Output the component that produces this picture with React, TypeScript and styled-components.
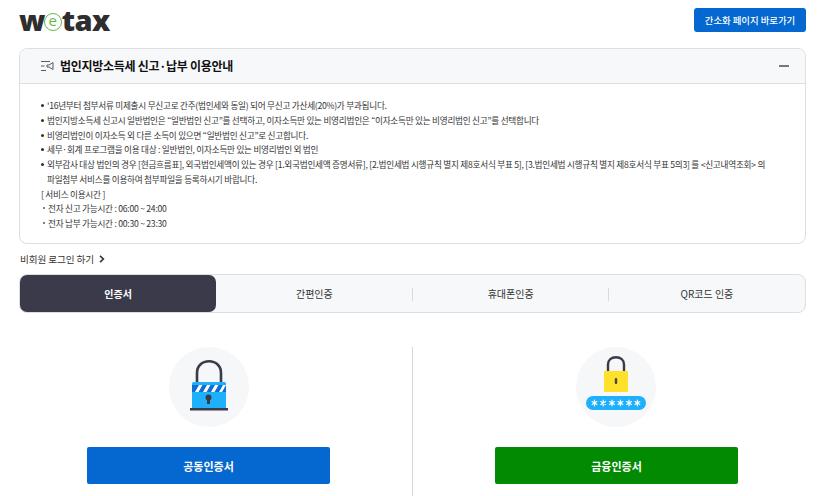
import React from "react";
import styled, { createGlobalStyle } from "styled-components";

const Global = createGlobalStyle`
  html, body { margin: 0; padding: 0; background: #fff; overflow: hidden; }
  body { font-family: "Noto Sans CJK KR", "Noto Sans", sans-serif; color: #222; }
  * { box-sizing: border-box; }
`;

const Page = styled.div`
  width: 829px;
  height: 496px;
  padding: 8px 23px 0 19px;
  overflow: hidden;
`;
const TopBar = styled.header`
  display: flex;
  justify-content: space-between;
  align-items: flex-start;
  height: 40px;
`;
const Logo = styled.div`
  display: flex;
  align-items: center;
  height: 24px;
  font-family: "Open Sans", "Liberation Sans", sans-serif;
  font-weight: 800;
  font-size: 29px;
  letter-spacing: -0.6px;
  color: #2e2e2e;
  line-height: 24px;
`;
const LogoE = styled.span`
  width: 18px;
  height: 18px;
  margin: 3px 0 0 -1px;
  border: 1.5px solid #62bb46;
  border-radius: 50%;
  color: #62bb46;
  font-size: 15px;
  font-weight: 500;
  line-height: 13px;
  text-align: center;
  letter-spacing: 0;
`;
const SimpleButton = styled.button`
  width: 112px;
  height: 24px;
  border: 0;
  border-radius: 3px;
  background: #0468d0;
  color: #fff;
  font: 500 9.4px "Noto Sans CJK KR", sans-serif;
  padding: 0;
`;
const Card = styled.section`
  height: 196px;
  border: 1px solid #dcdee2;
  border-radius: 8px;
  overflow: hidden;
`;
const CardHeader = styled.div`
  display: flex;
  align-items: center;
  height: 35px;
  padding: 0 16px 0 21px;
  background: #f7f8fa;
  border-bottom: 1px solid #dcdee2;
`;
const CardTitle = styled.h2`
  flex: 1;
  margin: -2px 0 0 5px;
  font-size: 12px;
  font-weight: 700;
  letter-spacing: -0.28px;
  color: #111;
`;
const Minus = styled.span`
  width: 10px;
  height: 2px;
  background: #77767e;
`;
const CardBody = styled.div`
  padding: 14px 20px 0 21px;
  font-size: 8.65px;
  line-height: 14.75px;
  letter-spacing: -0.26px;
  color: #333;
`;
const List = styled.ul`
  margin: 0;
  padding: 0;
  list-style: none;
`;
const Item = styled.li`
  position: relative;
  padding-left: 6px;
  &::before {
    content: "";
    position: absolute;
    left: 0;
    top: 6px;
    width: 3px;
    height: 3px;
    background: #333;
    border-radius: 50%;
  }
`;
const Plain = styled.div``;
const SubItem = styled.div`
  position: relative;
  padding-left: 7px;
  &::before {
    content: "";
    position: absolute;
    left: 2px;
    top: 6px;
    width: 2px;
    height: 2px;
    background: #555;
    border-radius: 50%;
  }
`;
const GuestLink = styled.div`
  display: flex;
  align-items: center;
  gap: 5px;
  height: 30px;
  padding-left: 1px;
  font-size: 9.6px;
  color: #333;
  letter-spacing: -0.1px;
`;
const Tabs = styled.nav`
  display: flex;
  height: 39px;
  background: #f7f8fa;
  border: 1px solid #dcdee2;
  border-radius: 8px;
`;
const Tab = styled.div<{ $active?: boolean; $divider?: boolean }>`
  position: relative;
  flex: 1;
  display: flex;
  align-items: center;
  justify-content: center;
  font-size: 10px;
  font-weight: ${(p) => (p.$active ? 700 : 400)};
  color: ${(p) => (p.$active ? "#fff" : "#333")};
  background: ${(p) => (p.$active ? "#3a3a4a" : "transparent")};
  border-radius: ${(p) => (p.$active ? "7px" : "0")};
  &::after {
    content: "";
    display: ${(p) => (p.$divider ? "block" : "none")};
    position: absolute;
    right: 0;
    top: 13px;
    height: 13px;
    width: 1px;
    background: #d9dade;
  }
`;
const Methods = styled.div`
  display: flex;
  margin-top: 34px;
  height: 149px;
`;
const Method = styled.div<{ $side: "left" | "right" }>`
  flex: 0 0 ${(p) => (p.$side === "left" ? "394px" : "393px")};
  display: flex;
  flex-direction: column;
  align-items: center;
  padding: ${(p) => (p.$side === "left" ? "0 14px 0 0" : "0 0 0 14px")};
  border-right: ${(p) => (p.$side === "left" ? "1px solid #d5d6da" : "0")};
`;
const IconCircle = styled.div<{ $nudge: number }>`
  width: 80px;
  height: 80px;
  margin-left: ${(p) => p.$nudge}px;
  border-radius: 50%;
  background: #f6f7f9;
  display: flex;
  align-items: center;
  justify-content: center;
`;
const Action = styled.button<{ $bg: string }>`
  margin-top: 20px;
  width: 243px;
  height: 37px;
  border: 0;
  border-radius: 2px;
  background: ${(p) => p.$bg};
  color: #fff;
  font: 700 11px "Noto Sans CJK KR", sans-serif;
  padding: 0;
`;

const Megaphone = () => (
  <svg width="14" height="12" viewBox="0 0 14 12" fill="none" stroke="#555a63" strokeWidth="1">
    <path d="M0 1.5h9M0 6h3.5M0 10.5h5" />
    <path d="M6 5h2l4-2.5v7L8 7H6z" />
  </svg>
);
const Chevron = () => (
  <svg width="6" height="8" viewBox="0 0 6 8" fill="none" stroke="#333" strokeWidth="1.6">
    <path d="M1 .8 4.400 4 1 7.200" />
  </svg>
);
const BlueLock = () => (
  <svg width="40" height="54" viewBox="0 0 40 54">
    <path d="M8 22V13C8 6 13 1.300 20 1.300S32 6 32 13v9" fill="none" stroke="#3a3a4a" strokeWidth="2.6" />
    <path d="M3 23.500q0-1.500 1.500-1.500h31q1.500 0 1.500 1.500V48H3z" fill="#1fb0fb" />
    <rect x="3" y="25" width="34" height="7" fill="#0f6fd0" />
    <path d="M6 32l4-7h3.500l-4 7zM14 32l4-7h3.500l-4 7zM22 32l4-7h3.500l-4 7zM30 32l4-7h3l-4 7z" fill="#fff" />
    <circle cx="19.500" cy="37.500" r="3" fill="#3a3a4a" />
    <rect x="18" y="38" width="3" height="6" fill="#3a3a4a" />
    <rect x="1" y="48" width="38" height="2.500" fill="#3a3a4a" />
  </svg>
);
const YellowLock = () => (
  <svg width="60" height="62" viewBox="0 0 60 62">
    <path d="M22 16V8.500C22 4 25.500 1.200 30 1.200S38 4 38 8.500V16" fill="none" stroke="#3a3a4a" strokeWidth="2.400" />
    <rect x="18" y="15" width="24" height="21" fill="#ffe02a" />
    <rect x="28.800" y="22" width="2.400" height="6" rx="1" fill="#4a4640" />
    <rect x="0" y="40" width="60" height="14" rx="7" fill="#1fb0fb" />
    <g stroke="#fff" strokeWidth="1.200" strokeLinecap="round">
      {[8.5, 17.2, 26, 34.4, 43, 51.4].map((x) => (
        <path key={x} d={`M${x} 44.200v5.600M${x - 2.4} 45.600l4.800 2.800M${x - 2.4} 48.400l4.800-2.800`} />
      ))}
    </g>
  </svg>
);

export default function App() {
  return (
    <Page>
      <Global />
      <TopBar>
        <Logo>
          w<LogoE>e</LogoE>tax
        </Logo>
        <SimpleButton>간소화 페이지 바로가기</SimpleButton>
      </TopBar>
      <Card>
        <CardHeader>
          <Megaphone />
          <CardTitle>법인지방소득세 신고·납부 이용안내</CardTitle>
          <Minus />
        </CardHeader>
        <CardBody>
          <List>
            <Item>'16년부터 첨부서류 미제출시 무신고로 간주(법인세와 동일) 되어 무신고 가산세(20%)가 부과됩니다.</Item>
            <Item>법인지방소득세 신고시 일반법인은 “일반법인 신고”를 선택하고, 이자소득만 있는 비영리법인은 “이자소득만 있는 비영리법인 신고”를 선택합니다</Item>
            <Item>비영리법인이 이자소득 외 다른 소득이 있으면 “일반법인 신고”로 신고합니다.</Item>
            <Item>세무·회계 프로그램을 이용 대상 : 일반법인, 이자소득만 있는 비영리법인 외 법인</Item>
            <Item>
              외부감사 대상 법인의 경우 [현금흐름표], 외국법인세액이 있는 경우 [1.외국법인세액 증명서류], [2.법인세법 시행규칙 별지 제8호서식 부표 5], [3.법인세법 시행규칙 별지 제8호서식 부표 5의3] 를 &lt;신고내역조회&gt; 의
              <br />
              파일첨부 서비스를 이용하여 첨부파일을 등록하시기 바랍니다.
            </Item>
          </List>
          <Plain>[ 서비스 이용시간 ]</Plain>
          <SubItem>전자 신고 가능시간 : 06:00 ~ 24:00</SubItem>
          <SubItem>전자 납부 가능시간 : 00:30 ~ 23:30</SubItem>
        </CardBody>
      </Card>
      <GuestLink>
        비회원 로그인 하기 <Chevron />
      </GuestLink>
      <Tabs>
        <Tab $active>인증서</Tab>
        <Tab $divider>간편인증</Tab>
        <Tab $divider>휴대폰인증</Tab>
        <Tab>QR코드 인증</Tab>
      </Tabs>
      <Methods>
        <Method $side="left">
          <IconCircle $nudge={1}>
            <BlueLock />
          </IconCircle>
          <Action $bg="#0468d0">공동인증서</Action>
        </Method>
        <Method $side="right">
          <IconCircle $nudge={-1}>
            <YellowLock />
          </IconCircle>
          <Action $bg="#028a02">금융인증서</Action>
        </Method>
      </Methods>
    </Page>
  );
}
